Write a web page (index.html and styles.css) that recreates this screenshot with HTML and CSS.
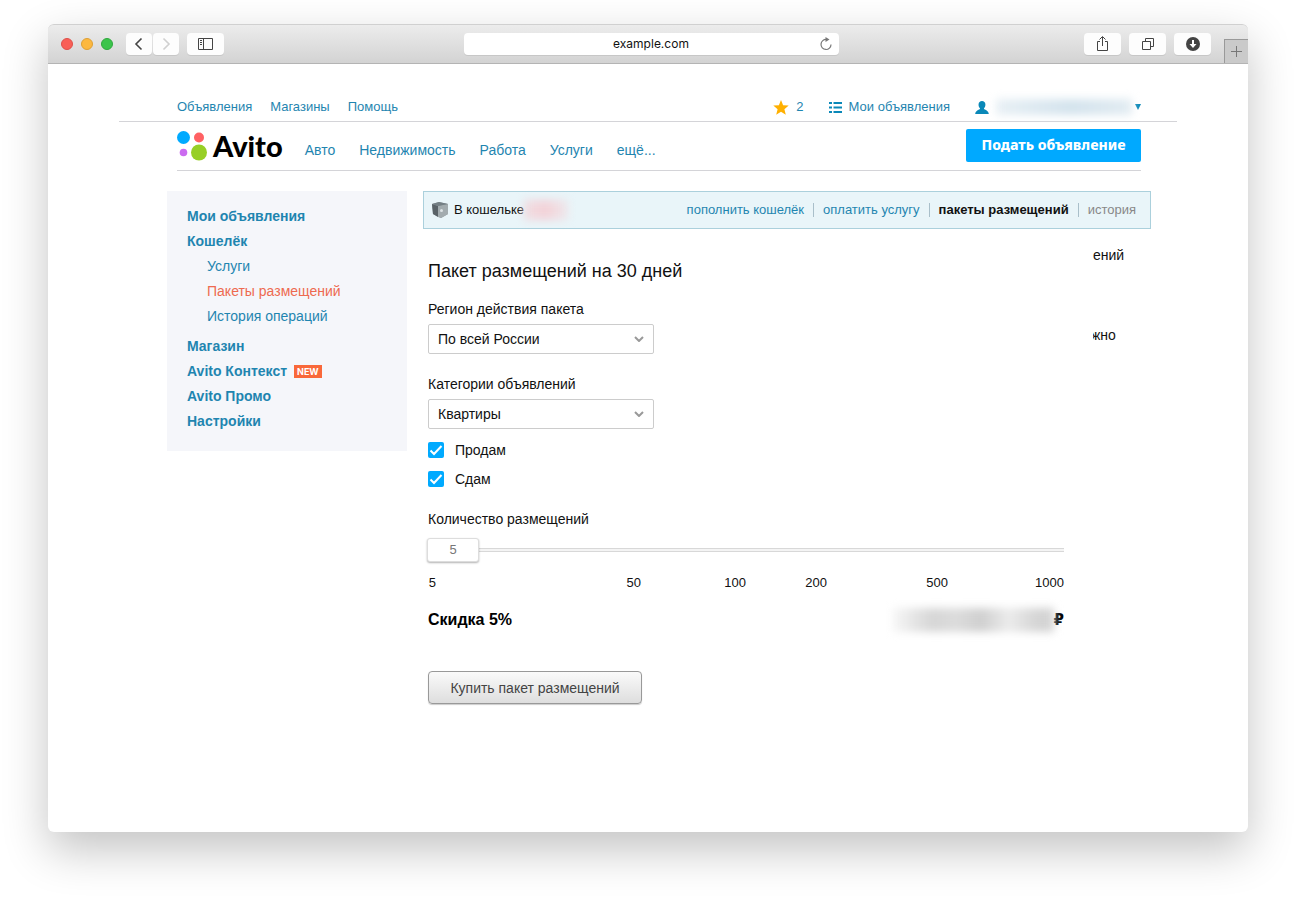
FILE: index.html
```html
<!DOCTYPE html>
<html lang="ru">
<head>
<meta charset="utf-8">
<meta name="viewport" content="width=device-width, initial-scale=1">
<title>Avito — Пакеты размещений</title>
<link rel="stylesheet" href="styles.css">
</head>
<body>
<div class="window">
  <div class="toolbar">
    <div class="toolbar-left">
      <div class="lights"><span class="light red"></span><span class="light yellow"></span><span class="light green"></span></div>
      <div class="history">
        <button class="tool half" aria-label="Назад"><svg width="26" height="22" viewBox="0 0 26 22"><path d="M15.500 5.500L10 11l5.500 5.500" fill="none" stroke="#444" stroke-width="1.600"/></svg></button>
        <button class="tool half" aria-label="Вперёд"><svg width="26" height="22" viewBox="0 0 26 22"><path d="M10.500 5.500L16 11l-5.500 5.500" fill="none" stroke="#d0d0d0" stroke-width="1.600"/></svg></button>
      </div>
      <button class="tool" aria-label="Боковая панель"><svg width="37" height="22" viewBox="0 0 37 22"><path d="M11.500 5.500h14v11h-14zM16.500 5.500v11M13 7.500h2M13 9.500h2M13 11.500h2" fill="none" stroke="#444"/></svg></button>
    </div>
    <div class="address"><span class="url">example.com</span><button class="reload" aria-label="Обновить"><svg width="14" height="14" viewBox="0 0 14 14"><path d="M7.500 2.500A5 5 0 1 0 12 7.500" fill="none" stroke="#777" stroke-width="1.200"/><path d="M6.500 0l4 2.600-4 2.400z" fill="#777"/></svg></button></div>
    <div class="toolbar-right">
      <button class="tool" aria-label="Поделиться"><svg width="37" height="22" viewBox="0 0 37 22"><path d="M16 8.500h-2.500v9h10v-9H21M18.500 13V4M15.500 6.500l3-3 3 3" fill="none" stroke="#444"/></svg></button>
      <button class="tool" aria-label="Вкладки"><svg width="37" height="22" viewBox="0 0 37 22"><path d="M13.500 8.500h8v8h-8zM16.500 8V5.500h8v8H22" fill="none" stroke="#444"/></svg></button>
      <button class="tool" aria-label="Загрузки"><svg width="37" height="22" viewBox="0 0 37 22"><circle cx="19" cy="11" r="7" fill="#444"/><path d="M19 7v5" stroke="#fff" stroke-width="2"/><path d="M15.500 11h7L19 15z" fill="#fff"/></svg></button>
      <button class="new-tab" aria-label="Новая вкладка"><svg width="12" height="12" viewBox="0 0 12 12"><path d="M5.500 0v11M0 5.500h11" stroke="#777"/></svg></button>
    </div>
  </div>

  <header>
    <div class="topbar">
      <nav class="top-links"><a href="#">Объявления</a><a href="#">Магазины</a><a href="#">Помощь</a></nav>
      <div class="user-links">
        <a href="#" class="favorites"><svg width="16" height="15" viewBox="0 0 16 15"><path d="M8 0l2.100 5.200 5.600.4-4.300 3.600 1.400 5.500L8 11.700l-4.800 3 1.400-5.500L.3 5.600l5.600-.4z" fill="#ffb000"/></svg>2</a>
        <a href="#" class="my-ads"><svg width="13" height="11" viewBox="0 0 13 11"><path d="M0 1h3M4.500 1H13M0 5.500h3M4.500 5.500H13M0 10h3M4.500 10H13" stroke="#0a88b8" stroke-width="2"/></svg>Мои объявления</a>
        <a href="#" class="account" aria-label="Профиль"><svg width="14" height="13" viewBox="0 0 14 13"><path d="M7 0c4.200 0 4.200 5.500 1.900 7.400.3 1.500 4.600 1.400 4.900 5.600H.2C.5 8.800 4.800 8.900 5.100 7.400 2.800 5.500 2.800 0 7 0z" fill="#0a88b8"/></svg><span class="smudge smudge-name"></span><svg width="6" height="7" viewBox="0 0 6 7"><path d="M0 0h6L3 6z" fill="#0a88b8"/></svg></a>
      </div>
    </div>
    <div class="mainbar">
      <a href="#" class="logo"><svg width="30" height="30" viewBox="0 0 30 30"><circle cx="6.500" cy="6.500" r="6.500" fill="#00aaff"/><circle cx="22" cy="6.500" r="5" fill="#ff6163"/><circle cx="6.500" cy="21.500" r="3.800" fill="#cb6bf0"/><circle cx="22" cy="21.500" r="8" fill="#97cf26"/></svg><span>Avito</span></a>
      <nav class="sections"><a href="#">Авто</a><a href="#">Недвижимость</a><a href="#">Работа</a><a href="#">Услуги</a><a href="#">ещё...</a></nav>
      <button class="post">Подать объявление</button>
    </div>
  </header>

  <div class="columns">
    <nav class="sidebar">
      <a href="#">Мои объявления</a>
      <a href="#">Кошелёк</a>
      <div class="sub">
        <a href="#">Услуги</a>
        <a href="#" class="current">Пакеты размещений</a>
        <a href="#">История операций</a>
      </div>
      <a href="#">Магазин</a>
      <a href="#">Avito Контекст<span class="new">NEW</span></a>
      <a href="#">Avito Промо</a>
      <a href="#">Настройки</a>
    </nav>

    <main>
      <div class="wallet">
        <svg width="18" height="18" viewBox="0 0 18 18"><path d="M1 3l7-2 9 2v10l-7 4-8-4z" fill="#8b9498"/><path d="M1 3l6 2v11l-5-3z" fill="#596267"/><path d="M7 5l10-2v10l-7 4-3-1z" fill="#a2abae"/><path d="M1 3l7-2 9 2-10 2z" fill="#747f84"/><circle cx="10.500" cy="9.500" r="1.500" fill="#dce2e4"/></svg>
        <span class="wallet-text">В кошельке</span><span class="smudge smudge-sum"></span>
        <div class="wallet-links"><a href="#">пополнить кошелёк</a><a href="#">оплатить услугу</a><a href="#" class="active">пакеты размещений</a><a href="#" class="muted">история</a></div>
      </div>
      <div class="content">
        <form>
          <h1>Пакет размещений на 30 дней</h1>
          <div class="field">
            <label for="region">Регион действия пакета</label>
            <select id="region"><option>По всей России</option></select>
          </div>
          <div class="field">
            <label for="category">Категории объявлений</label>
            <select id="category"><option>Квартиры</option></select>
          </div>
          <div class="checks">
            <label><input type="checkbox" checked>Продам</label>
            <label><input type="checkbox" checked>Сдам</label>
          </div>
          <label for="amount">Количество размещений</label>
          <div class="slider"><input type="range" id="amount" min="5" max="1000" value="5"><output for="amount">5</output></div>
          <div class="scale"><span>5</span><span>50</span><span>100</span><span>200</span><span>500</span><span>1000</span></div>
          <div class="total"><span>Скидка 5%</span><span class="price"><span class="smudge smudge-price"></span>₽</span></div>
          <button type="button" class="buy">Купить пакет размещений</button>
        </form>
        <aside><p>ений</p><p class="cut">жно</p></aside>
      </div>
    </main>
  </div>
</div>
</body>
</html>
```
FILE: styles.css
```css
* { box-sizing: border-box; }
body {
  margin: 0;
  min-height: 100vh;
  padding: 24px 48px 73px;
  display: flex;
  background: #fff;
  color: #111;
  font: 14px/20px "Liberation Sans", Arial, sans-serif;
}
a { color: #1f85b0; text-decoration: none; }
button { font: inherit; margin: 0; padding: 0; border: 0; }
svg { display: block; flex: none; }

.window {
  flex: 1;
  min-width: 0;
  border-radius: 6px;
  background: #fff;
  box-shadow: 0 18px 46px rgba(0, 0, 0, .24);
}

/* browser toolbar */
.toolbar {
  display: grid;
  grid-template-columns: 416fr 375fr 409fr;
  height: 40px;
  align-items: center;
  border-radius: 6px 6px 0 0;
  border-top: 1px solid #d0d0d0;
  border-bottom: 1px solid #b4b4b4;
  background: linear-gradient(#ececec, #d3d3d3);
}
.toolbar-left { display: flex; align-items: center; gap: 8px; padding-left: 13px; }
.lights { display: flex; gap: 8px; margin-right: 5px; }
.light { width: 12px; height: 12px; border-radius: 50%; }
.red { background: #f95f57; border: 1px solid #de5049; }
.yellow { background: #fcb840; border: 1px solid #dea035; }
.green { background: #3bc44b; border: 1px solid #2fa83d; }
.history { display: flex; gap: 1px; }
.tool {
  width: 37px;
  height: 22px;
  border-radius: 4px;
  background: #fdfdfd;
  box-shadow: 0 1px 0 rgba(0, 0, 0, .08);
}
.half { width: 26px; }
.address {
  display: flex;
  align-items: center;
  height: 22px;
  padding: 0 6px 0 19px;
  border-radius: 4px;
  background: #fff;
  box-shadow: 0 1px 0 rgba(0, 0, 0, .08);
}
.url { flex: 1; text-align: center; font: 12px/22px Inter, sans-serif; }
.reload { background: none; }
.toolbar-right { display: flex; align-items: center; align-self: stretch; justify-content: flex-end; gap: 8px; }
.new-tab {
  display: flex;
  align-items: center;
  justify-content: center;
  align-self: flex-end;
  width: 24px;
  height: 24px;
  margin-left: 5px;
  border: 1px solid #999;
  border-width: 1px 0 0 1px;
  background: #cacaca;
}

/* site header */
.topbar {
  display: flex;
  justify-content: space-between;
  margin: 0 71px;
  padding: 33px 36px 4px 58px;
  border-bottom: 1px solid #d4d4d8;
  font-size: 13px;
}
.top-links { display: flex; gap: 18px; }
.user-links { display: flex; gap: 25px; }
.user-links a { display: flex; align-items: center; gap: 7px; }
.mainbar {
  display: flex;
  align-items: center;
  height: 49px;
  margin: 0 107px 0 129px;
  border-bottom: 1px solid #d4d4d8;
}
.logo { display: flex; align-items: center; gap: 6px; color: #000; font: 900 29px/30px Lato, sans-serif; }
.sections { display: flex; gap: 24px; margin-left: 22px; padding-top: 8px; }
.post {
  width: 175px;
  height: 33px;
  margin: 0 0 2px auto;
  border-radius: 2px;
  background: #00a9ff;
  color: #fff;
  font: 800 14px/20px "Noto Sans", sans-serif;
}

/* page columns */
.columns { display: flex; align-items: flex-start; gap: 16px; margin: 20px 97px 0 119px; }
.sidebar {
  flex: none;
  width: 240px;
  padding: 13px 20px 17px;
  background: #f5f6fa;
  font-weight: 700;
  line-height: 25px;
}
.sidebar a { display: flex; align-items: center; }
.sub { padding: 0 0 5px 20px; font-weight: 400; }
.sidebar .current { color: #ee6a50; }
.new {
  margin-left: 7px;
  padding: 0 3px;
  background: #f9683a;
  color: #fff;
  font: 700 9px/13px Inter, sans-serif;
}
main { flex: 1; min-width: 0; }
.wallet {
  display: flex;
  align-items: center;
  height: 38px;
  padding: 0 14px 0 7px;
  border: 1px solid #abd0dc;
  background: #e9f5f9;
  font-size: 13px;
}
.wallet-text { margin-left: 5px; }
.wallet-links { display: flex; margin-left: auto; line-height: 14px; }
.wallet-links a + a { margin-left: 9px; padding-left: 9px; border-left: 1px solid #a9bfca; }
.wallet-links .active { color: #111; font-weight: 700; }
.wallet-links .muted { color: #888; }

.content { display: grid; grid-template-columns: 1fr 58px; gap: 29px; padding-left: 5px; }
h1 { margin: 30px 0 16px; font-size: 18px; line-height: 24px; font-weight: 400; }
.field { margin-bottom: 20px; }
.field label { display: block; margin-bottom: 5px; }
select {
  display: block;
  width: 226px;
  height: 30px;
  padding: 0 9px;
  border: 1px solid #ccc;
  border-radius: 2px;
  appearance: none;
  background: #fff url("data:image/svg+xml,%3Csvg xmlns='http://www.w3.org/2000/svg' width='10' height='6'%3E%3Cpath d='M1 1l4 4 4-4' fill='none' stroke='%23999' stroke-width='2'/%3E%3C/svg%3E") no-repeat right 9px center;
  color: #111;
  font: inherit;
}
.checks { display: grid; gap: 9px; margin: -9px 0 20px; }
.checks label { display: flex; align-items: center; gap: 11px; }
.checks input {
  width: 16px;
  height: 16px;
  margin: 0;
  border-radius: 2px;
  appearance: none;
  background: #0af url("data:image/svg+xml,%3Csvg xmlns='http://www.w3.org/2000/svg' width='16' height='16'%3E%3Cpath d='M2.500 8.500l3.500 3.500 7.500-8' fill='none' stroke='white' stroke-width='2'/%3E%3C/svg%3E");
}
.slider { position: relative; height: 24px; margin: 9px 0 11px -1px; }
.slider input { display: block; width: 100%; height: 24px; margin: 0; appearance: none; background: none; }
.slider input::-webkit-slider-runnable-track {
  height: 4px;
  background: linear-gradient(#d8d8d8 1px, #f4f4f4 1px 3px, #d8d8d8 3px);
}
.slider input::-webkit-slider-thumb {
  appearance: none;
  width: 52px;
  height: 24px;
  margin-top: -10px;
  border: 1px solid #ddd;
  border-radius: 3px;
  background: #fff;
  box-shadow: 0 1px 2px rgba(0, 0, 0, .3);
}
.slider output {
  position: absolute;
  left: 0;
  top: 0;
  width: 52px;
  font-size: 13px;
  line-height: 24px;
  text-align: center;
  color: #777;
  pointer-events: none;
}
.scale {
  display: grid;
  grid-template-columns: 8fr 205fr 105fr 81fr 121fr 116fr;
  text-align: right;
  font-size: 13px;
}
.total { display: flex; justify-content: space-between; margin: 14px 0 38px; font-size: 16px; line-height: 26px; font-weight: 700; color: #000; }
.price { display: flex; align-items: center; font: 700 15px/26px "DejaVu Sans", sans-serif; }
.buy {
  display: block;
  width: 214px;
  height: 33px;
  border: 1px solid #999;
  border-radius: 4px;
  background: linear-gradient(#fafafa, #dedede);
  box-shadow: 0 1px 1px rgba(0, 0, 0, .2);
  color: #444;
}
aside { padding-top: 16px; }
aside p { margin: 0 0 60px; }
.cut { overflow: hidden; text-indent: -2px; }

/* hidden personal data */
.smudge { flex: none; filter: blur(4px); }
.smudge-name { width: 136px; height: 16px; margin-right: -4px; background: linear-gradient(90deg, #e8f0f5, #d3e3ed 55%, #e2ecf2); }
.smudge-sum { width: 44px; height: 20px; background: linear-gradient(90deg, #f0dde2, #f3d2d8 50%, #eee8ec); }
.smudge-price { width: 162px; height: 24px; background: linear-gradient(90deg, #f8f8f8, #d6d6d6 25%, #dcdcdc 40%, #cfcfcf 55%, #ececec 72%, #d4d4d4 90%); }
```
